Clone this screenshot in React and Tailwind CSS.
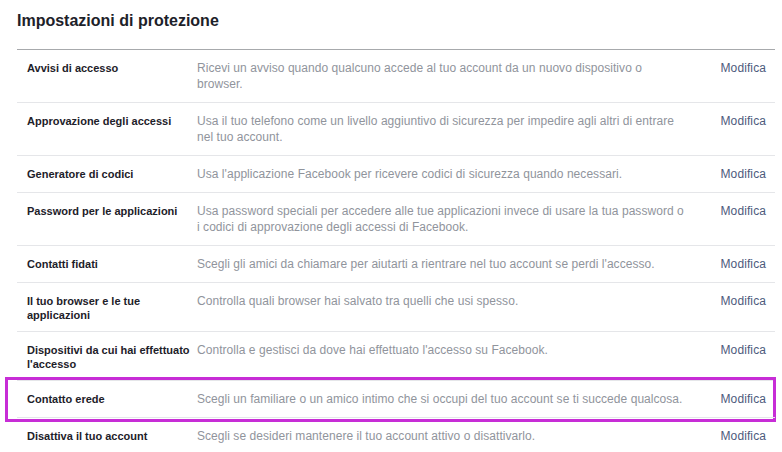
const ROWS = [
  {
    label: "Avvisi di accesso",
    desc: "Ricevi un avviso quando qualcuno accede al tuo account da un nuovo dispositivo o browser.",
  },
  {
    label: "Approvazione degli accessi",
    desc: "Usa il tuo telefono come un livello aggiuntivo di sicurezza per impedire agli altri di entrare nel tuo account.",
  },
  {
    label: "Generatore di codici",
    desc: "Usa l'applicazione Facebook per ricevere codici di sicurezza quando necessari.",
  },
  {
    label: "Password per le applicazioni",
    desc: "Usa password speciali per accedere alle tue applicazioni invece di usare la tua password o i codici di approvazione degli accessi di Facebook.",
  },
  {
    label: "Contatti fidati",
    desc: "Scegli gli amici da chiamare per aiutarti a rientrare nel tuo account se perdi l'accesso.",
  },
  {
    label: "Il tuo browser e le tue applicazioni",
    desc: "Controlla quali browser hai salvato tra quelli che usi spesso.",
  },
  {
    label: "Dispositivi da cui hai effettuato l'accesso",
    desc: "Controlla e gestisci da dove hai effettuato l'accesso su Facebook.",
  },
  {
    label: "Contatto erede",
    desc: "Scegli un familiare o un amico intimo che si occupi del tuo account se ti succede qualcosa.",
    highlight: true,
  },
  {
    label: "Disattiva il tuo account",
    desc: "Scegli se desideri mantenere il tuo account attivo o disattivarlo.",
  },
];

function SettingRow({ row, first }) {
  return (
    <div
      className={`relative flex items-start py-[10px] ${
        first ? "border-t border-[#a7a9ac]" : "border-t border-[#e5e6e9]"
      }`}
    >
      <div className="w-[180px] shrink-0 pl-[10px] text-[11px] leading-[14px] pt-[1px] -mb-[1px] font-bold text-[#1d2129]">
        {row.label}
      </div>
      <div className="w-[487px] shrink-0 text-[12px] leading-[16px] tracking-[0.05px] text-[#90949c]">
        {row.desc}
      </div>
      <a className="ml-auto pr-[9px] text-[12px] leading-[16px] tracking-[0.1px] text-[#4e5b7c] cursor-pointer">
        Modifica
      </a>
      {row.highlight && (
        <div className="absolute top-[-4px] bottom-[-5px] left-[-12px] right-[-1px] border-[3px] border-[#c72dd6] pointer-events-none" />
      )}
    </div>
  );
}

export default function App() {
  return (
    <div
      className="w-[782px] h-[452px] overflow-hidden bg-white"
      style={{ fontFamily: '"Liberation Sans", Arial, sans-serif' }}
    >
      <div className="pl-[17px] pr-[7px] pt-[11px]">
        <h1 className="text-[16px] leading-[20px] font-bold text-[#1d2129] mb-[18px]">
          Impostazioni di protezione
        </h1>
        <div>
          {ROWS.map((r, i) => (
            <SettingRow key={r.label} row={r} first={i === 0} />
          ))}
        </div>
      </div>
    </div>
  );
}
